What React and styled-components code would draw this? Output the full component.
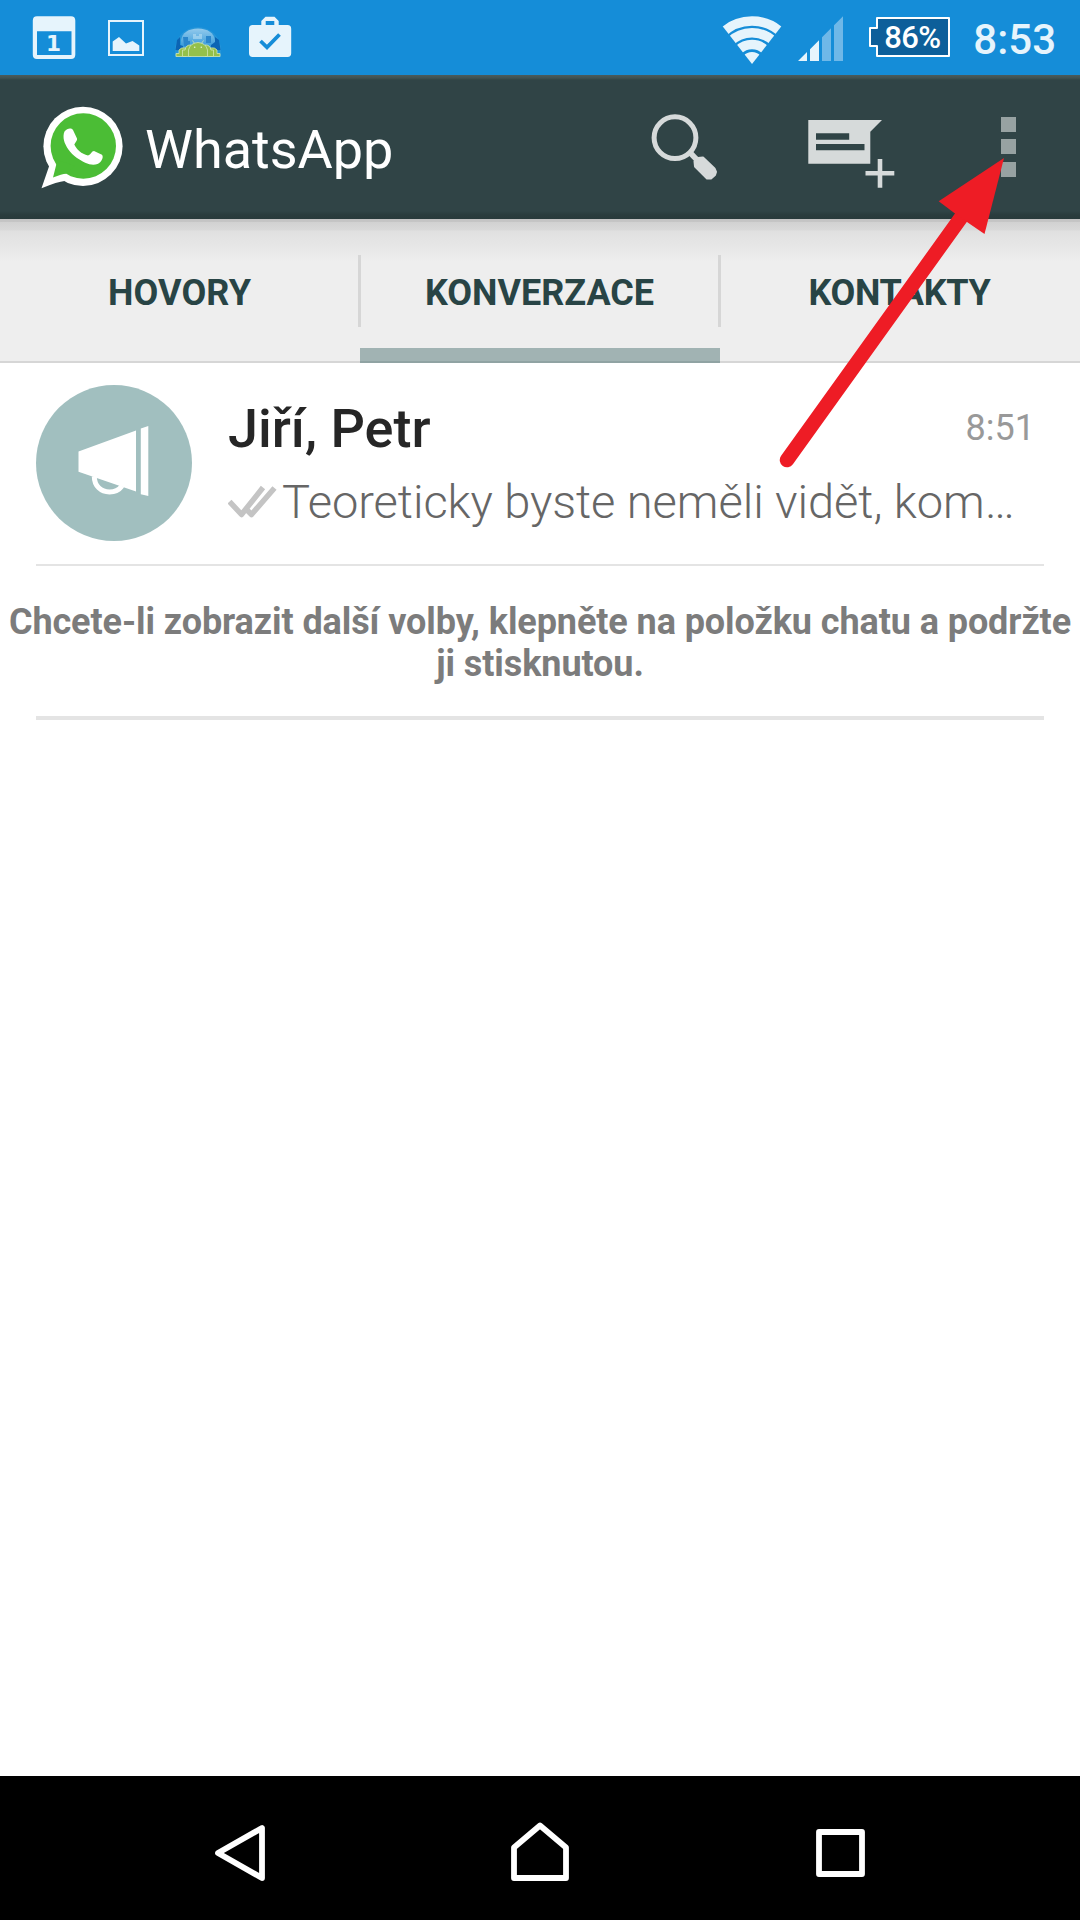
import React from "react";
import styled, { createGlobalStyle } from "styled-components";

const GlobalStyle = createGlobalStyle`
  * { box-sizing: border-box; }
  html, body { margin: 0; padding: 0; background: #fff; }
  body { font-family: Roboto, "Noto Sans", sans-serif; }
  svg { display: block; flex: none; }
`;

const Screen = styled.div`
  position: relative;
  display: flex;
  flex-direction: column;
  width: 1080px;
  height: 1920px;
  background: #fff;
  overflow: hidden;
`;

const StatusBar = styled.header`
  display: flex;
  justify-content: space-between;
  height: 75px;
  flex: none;
  padding: 0 24px 0 18px;
  background: #158dd8;
`;

const StatusGroup = styled.div`
  display: flex;
`;

const SignalGroup = styled.div`
  display: flex;
  gap: 15px;
`;

const Battery = styled.div`
  position: relative;
  display: flex;
  width: 81px;
  height: 75px;
  margin: 0 23px 0 25px;
`;

const BatteryLabel = styled.span`
  position: absolute;
  left: 15px;
  top: 18px;
  font-size: 31px;
  font-weight: 500;
  line-height: 40px;
  letter-spacing: -0.6px;
  color: #fff;
`;

const Clock = styled.span`
  font-size: 42px;
  line-height: 49px;
  padding-top: 15px;
  font-weight: 500;
  color: #e6f4fc;
`;

const AppBar = styled.div`
  display: flex;
  height: 144px;
  flex: none;
  padding-left: 36px;
  background: linear-gradient(
    #4a5c5d 0, #3f5253 3px, #304446 5px, #304446 136px, #2a3c3d 140px, #283a3b 144px
  );
`;

const Title = styled.h1`
  flex: 1;
  margin: 0;
  padding: 0 0 0 13px;
  font-size: 54px;
  font-weight: 400;
  line-height: 149px;
  color: #fff;
`;

const Tabs = styled.nav`
  display: flex;
  height: 144px;
  flex: none;
  background: linear-gradient(
    #c3c3c3 0, #c5c5c5 3px, #d1d1d1 3px, #d9d9d9 11px, #e0e0e0 12px, #e6e6e6 26px, #ebebeb 36px, #eee 42px
  );
`;

const Tab = styled.div`
  position: relative;
  flex: 1;
  border-bottom: 2px solid ${(p) => (p.$active ? "#90a3a3" : "#d6d6d6")};
  box-shadow: ${(p) => (p.$active ? "inset 0 -13px #a1b3b3" : "none")};
  font-size: 36px;
  font-weight: 700;
  line-height: 149px;
  letter-spacing: ${(p) => p.$tracking || 0}px;
  height: 144px;
  padding-right: 1px;
  text-align: center;
  color: #284445;

  &:not(:first-child)::before {
    content: "";
    position: absolute;
    left: -2px;
    top: 36px;
    width: 3px;
    height: 72px;
    background: #d6d6d6;
  }
`;

const ChatRow = styled.article`
  display: flex;
  height: 203px;
  flex: none;
  margin: 0 36px;
  padding-top: 22px;
  border-bottom: 2px solid #e4e4e4;
`;

const Avatar = styled.div`
  width: 156px;
  height: 156px;
  flex: none;
  border-radius: 50%;
  background: #a1bfbf;
`;

const ChatBody = styled.div`
  flex: 1;
  min-width: 0;
  padding-left: 36px;
`;

const ChatHead = styled.div`
  display: flex;
  justify-content: space-between;
  padding: 12px 9px 0 0;
`;

const ChatName = styled.h2`
  margin: 0;
  font-size: 54px;
  font-weight: 500;
  line-height: 64px;
  color: #262626;
`;

const ChatTime = styled.time`
  font-size: 36px;
  line-height: 62px;
  color: #999;
`;

const Preview = styled.p`
  display: flex;
  gap: 2px;
  margin: 0;
  padding-top: 11px;
  font-size: 47px;
  font-weight: 300;
  line-height: 60px;
  letter-spacing: -0.06px;
  white-space: nowrap;
  color: #666;
`;

const Hint = styled.p`
  flex: none;
  height: 150px;
  margin: 0;
  padding-top: 35px;
  font-size: 36px;
  font-weight: 700;
  line-height: 42px;
  letter-spacing: -0.09px;
  text-align: center;
  color: #7c7c7c;
`;

const Rule = styled.hr`
  flex: none;
  width: 1008px;
  height: 4px;
  margin: 0 36px;
  border: 0;
  background: #e4e4e4;
`;

const Spacer = styled.div`
  flex: 1;
`;

const NavBar = styled.footer`
  display: flex;
  justify-content: center;
  gap: 156px;
  height: 144px;
  flex: none;
  background: #000;
`;

const ArrowLayer = styled.svg`
  position: absolute;
  left: 770px;
  top: 150px;
  pointer-events: none;
`;

const ICE = "#e6f4fc";
const ASH = "#d6dada";

const CalendarIcon = () => (
  <svg width="72" height="75" viewBox="18 0 72 75">
    <path fill={ICE} fillRule="evenodd" d="M37 16.3H71Q75.3 16.3 75.3 20.6V54.8Q75.3 59 71 59H37Q32.8 59 32.8 54.8V20.6Q32.8 16.3 37 16.3ZM37 31.3V55H71.5V31.3Z" />
    <text x="53.5" y="51.4" textAnchor="middle" fontFamily="DejaVu Sans" fontWeight="700" fontSize="21.5" fill={ICE}>1</text>
  </svg>
);

const PictureIcon = () => (
  <svg width="72" height="75" viewBox="90 0 72 75">
    <rect x="109" y="21" width="34" height="34" fill="none" stroke={ICE} strokeWidth="2" />
    <path fill={ICE} d="M112.7 51V41.5L119 37L126 43.5L132.5 41L139.3 45.5V51Z" />
  </svg>
);

const DroidsIcon = () => (
  <svg width="72" height="75" viewBox="162 0 72 75">
    <defs>
      <linearGradient id="dome" x1="0" y1="0" x2="0" y2="1">
        <stop offset="0" stopColor="#93caec" />
        <stop offset="0.5" stopColor="#62b1e3" />
        <stop offset="1" stopColor="#2f97d9" />
      </linearGradient>
    </defs>
    <path fill="#2c98da" d="M175 57V50A23 23 0 0 1 221 50V57Z" opacity=".7" />
    <path fill="url(#dome)" d="M181 40Q183 29 198 28.500Q213 29 215 40V48H181Z" />
    <path fill="#0b64b4" d="M175.500 50L177 40L180 37V45L183 46V51ZM220.500 50L219 40L215 37V42L211 45V51Z" />
    <path fill="#2a86cc" d="M183 37h5v4h2v5h-6zM206 36h5v7h-5z" />
    <path fill="#b6def3" d="M193 34h3v2h3v-2h3v5h-9z" opacity=".6" />
    <g fill="#94c04b" stroke="#cfe6b4" strokeWidth="0.8">
      <path d="M176 56.500V53.500H179V50Q181 47 186 48V56.500ZM220 56.500V53.500H217V50Q215 47 210 48V56.500Z" />
      <path d="M182.500 56.500V50H185Q186 44.500 191 45V56.500ZM213.500 56.500V50H211Q210 44.500 205 45V56.500Z" />
      <path d="M188.500 56.500V50Q190 43 198 42.500Q206 43 207.500 50V56.500Z" />
      <path d="M192.500 40.500l2 3M203.500 40.500l-2 3" />
    </g>
    <circle cx="194.700" cy="47.200" r="0.8" fill="#e4f2d6" />
    <circle cx="201.300" cy="47.200" r="0.8" fill="#e4f2d6" />
  </svg>
);

const BagIcon = () => (
  <svg width="72" height="75" viewBox="234 0 72 75">
    <path fill={ICE} fillRule="evenodd" d="M261.300 25V21L265.500 16.700H274.500L278.700 21V25H287.500Q291.200 25 291.200 28.700V53.300Q291.200 57 287.500 57H252.700Q249 57 249 53.300V28.700Q249 25 252.700 25ZM265.700 21V25H274.300V21Z" />
    <path d="M260.500 41L267 47.300L279.500 34.500" fill="none" stroke="#158dd8" strokeWidth="3.800" />
  </svg>
);

const WifiIcon = () => (
  <svg width="60" height="75" viewBox="722 0 60 75">
    <defs>
      <clipPath id="fan"><path d="M752 64L718 20.500V10H786V20.500Z" /></clipPath>
    </defs>
    <g clipPath="url(#fan)" fill="none" stroke={ICE}>
      <circle cx="752" cy="64" r="43" strokeWidth="9.400" />
      <circle cx="752" cy="64" r="31.300" strokeWidth="9.400" />
      <circle cx="752" cy="64" r="19.500" strokeWidth="9.300" />
      <circle cx="752" cy="64" r="6" strokeWidth="12" />
    </g>
  </svg>
);

const SignalIcon = () => (
  <svg width="47" height="75" viewBox="797 0 47 75">
    <path fill={ICE} d="M798 61L807 52V61ZM810 61V49.200L819 40.200V61Z" />
    <path fill="#6fb8e8" d="M822 61V37.200L831 28.200V61ZM834 61V25.200L843 16.200V61Z" />
  </svg>
);

const BatteryShape = () => (
  <svg width="81" height="75" viewBox="869 0 81 75">
    <path fill="#0d5f9a" stroke="#fff" strokeWidth="2" strokeLinejoin="round" d="M877 18H949V56H877V46H870V28H877Z" />
  </svg>
);

const Logo = () => (
  <svg width="96" height="144" viewBox="36 75 96 144">
    <circle cx="83" cy="146.300" r="39.600" fill="#fff" />
    <path fill="#fff" d="M41.500 188.300L49.500 165L70 160L64.500 181Q58 181.500 41.500 188.300Z" />
    <circle cx="83.300" cy="146" r="32.700" fill="#4bbd35" />
    <path fill="#4bbd35" d="M53 177.500L56.300 164.500L55 159L75 166L66 173.800Q62 174 53 177.500Z" />
    <path fill="#fff" d="M64.500 131.500C67 128.500 71 127.500 73 130L77 138.500C77.500 140 76 141.500 74.300 144.500C76.500 149.500 81.500 154 88 155.500C91 154.500 91.500 151 94 151L102 154.800C104 157 101.500 162.500 97.500 164C91 166.500 84 162.500 77 158C70 153 65.500 146 64 140.500C63.300 137.500 63.300 134 64.500 131.500Z" />
  </svg>
);

const SearchIcon = () => (
  <svg width="162" height="144" viewBox="612 75 162 144">
    <circle cx="675" cy="137.700" r="20.900" fill="none" stroke={ASH} strokeWidth="5" />
    <path d="M689.500 152L698 161" stroke={ASH} strokeWidth="5.500" />
    <path
      fill={ASH}
      stroke={ASH}
      strokeWidth="2"
      strokeLinejoin="round"
      d="M698 158L703 157.500L714.500 168.500L716 172L715 175L711 178.500H707L695 166.500L694.500 161.500Z"
    />
  </svg>
);

const NewChatIcon = () => (
  <svg width="162" height="144" viewBox="774 75 162 144">
    <path fill={ASH} fillRule="evenodd" d="M808.300 120H882L870.300 131.800V163.800H808.300ZM816 133.300V139.700H849.200V133.300ZM816 144V150.300H864.500V144Z" />
    <path fill={ASH} d="M877.700 159H882.300V171H894.300V175.500H882.300V187.700H877.700V175.500H865.500V171H877.700Z" />
  </svg>
);

const OverflowIcon = () => (
  <svg width="144" height="144" viewBox="936 75 144 144">
    <path fill="#97a2a2" d="M1001 117h15v15h-15zM1001 139h15v15h-15zM1001 162h15v15h-15z" />
  </svg>
);

const Megaphone = () => (
  <svg width="156" height="156" viewBox="36 385 156 156">
    <path fill="#fff" d="M78.500 451.500L136 430.500V491.500L78.500 471.700ZM140.800 428.500L148.300 426V496L140.800 494.200Z" />
    <path fill="none" stroke="#fff" strokeWidth="5" d="M94.300 476.500C94.300 486 101 492 109.500 492C115.500 492 119 490 122 486" />
  </svg>
);

const Ticks = () => (
  <svg width="52" height="60" viewBox="228 470 52 60">
    <g fill="none" stroke="#c4c4c4" strokeWidth="5.500" strokeLinejoin="round">
      <path d="M229.500 499.500L241.500 512.500L263 485.500" />
      <path d="M247.500 508.500L251.500 512.500L274.500 486" />
    </g>
  </svg>
);

const BackIcon = () => (
  <svg width="144" height="144" viewBox="168 1776 144 144">
    <path fill="none" stroke="#fff" strokeWidth="5.800" strokeLinejoin="round" d="M262 1828V1878L218 1853Z" />
  </svg>
);

const HomeIcon = () => (
  <svg width="144" height="144" viewBox="468 1776 144 144">
    <path fill="none" stroke="#fff" strokeWidth="5.800" strokeLinejoin="round" d="M514 1878V1847.500L540 1825.500L566 1847.500V1878Z" />
  </svg>
);

const RecentsIcon = () => (
  <svg width="144" height="144" viewBox="768 1776 144 144">
    <rect x="819" y="1832" width="43" height="42" fill="none" stroke="#fff" strokeWidth="5.800" strokeLinejoin="round" />
  </svg>
);

const Arrow = () => (
  <ArrowLayer width="240" height="330" viewBox="770 150 240 330">
    <path d="M787 460L965 212" stroke="#ee1c25" strokeWidth="14.500" strokeLinecap="round" />
    <path fill="#ee1c25" d="M1004 158L984.500 234L967 222L955 213.500L938.700 201.300Z" />
  </ArrowLayer>
);

export default function App() {
  return (
    <>
      <GlobalStyle />
      <Screen>
        <StatusBar>
          <StatusGroup>
            <CalendarIcon />
            <PictureIcon />
            <DroidsIcon />
            <BagIcon />
          </StatusGroup>
          <StatusGroup>
            <SignalGroup>
              <WifiIcon />
              <SignalIcon />
            </SignalGroup>
            <Battery>
              <BatteryShape />
              <BatteryLabel>86%</BatteryLabel>
            </Battery>
            <Clock>8:53</Clock>
          </StatusGroup>
        </StatusBar>
        <AppBar>
          <Logo />
          <Title>WhatsApp</Title>
          <SearchIcon />
          <NewChatIcon />
          <OverflowIcon />
        </AppBar>
        <Tabs>
          <Tab $tracking={0.1}>HOVORY</Tab>
          <Tab $active>KONVERZACE</Tab>
          <Tab $tracking={-0.3}>KONTAKTY</Tab>
        </Tabs>
        <ChatRow>
          <Avatar>
            <Megaphone />
          </Avatar>
          <ChatBody>
            <ChatHead>
              <ChatName>Jiří, Petr</ChatName>
              <ChatTime>8:51</ChatTime>
            </ChatHead>
            <Preview>
              <Ticks />
              <span>Teoreticky byste neměli vidět, kom…</span>
            </Preview>
          </ChatBody>
        </ChatRow>
        <Hint>
          Chcete-li zobrazit další volby, klepněte na položku chatu a podržte
          <br />
          ji stisknutou.
        </Hint>
        <Rule />
        <Spacer />
        <NavBar>
          <BackIcon />
          <HomeIcon />
          <RecentsIcon />
        </NavBar>
        <Arrow />
      </Screen>
    </>
  );
}
